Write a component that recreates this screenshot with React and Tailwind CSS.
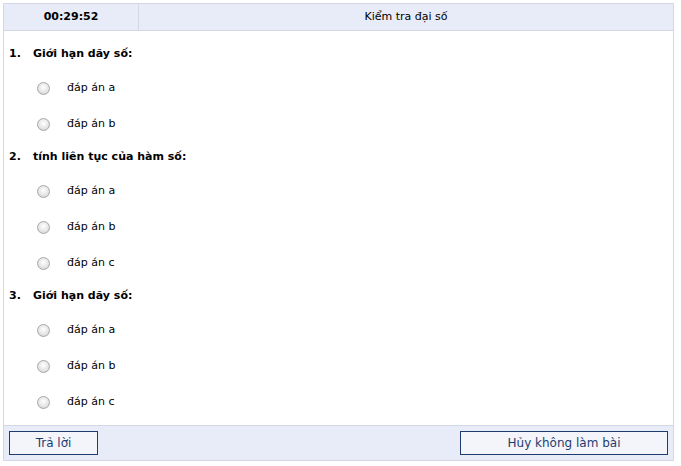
const questions = [
  { title: "Giới hạn dãy số:", options: ["đáp án a", "đáp án b"] },
  { title: "tính liên tục của hàm số:", options: ["đáp án a", "đáp án b", "đáp án c"] },
  { title: "Giới hạn dãy số:", options: ["đáp án a", "đáp án b", "đáp án c"] },
];

const Radio = () => (
  <span className="inline-block w-[13px] h-[13px] rounded-full border border-[#a8a8a8] bg-[radial-gradient(circle_at_50%_40%,#ffffff_0%,#e6e6e6_55%,#c8c8c8_100%)]" />
);

export default function App() {
  return (
    <div className="bg-white w-[681px] h-[466px] pt-[3px] pl-[3px]" style={{ fontFamily: "'DejaVu Sans', Verdana, sans-serif" }}>
      <div className="w-[671px] border border-[#d4d8e4] text-[11px] text-black">
        {/* header */}
        <div className="flex h-[27px] bg-[#e8ecf8] border-b border-[#d4d8e4]">
          <div className="w-[135px] border-r border-[#d4d8e4] flex items-center justify-center font-bold">00:29:52</div>
          <div className="flex-1 flex items-center justify-center">Kiểm tra đại số</div>
        </div>

        {/* questions */}
        <div className="h-[394px] overflow-hidden pt-[13px] pl-[5px]">
          {questions.map((q, i) => (
            <div key={i} className="mb-[5px]">
              <div className="flex items-center h-[20px] font-bold">
                <span className="w-[24px] shrink-0">{i + 1}.</span>
                <span>{q.title}</span>
              </div>
              <div className="pt-[6px]">
                {q.options.map((o) => (
                  <label key={o} className="flex items-center h-[36px] pl-[28px]">
                    <Radio />
                    <span className="ml-[17px]">{o}</span>
                  </label>
                ))}
              </div>
            </div>
          ))}
        </div>

        {/* footer */}
        <div className="flex justify-between items-center h-[35px] bg-[#e8ecf8] border-t border-[#d4d8e4] px-[5px]">
          <button className="w-[89px] h-[24px] border border-[#1f3c6e] bg-[#f3f5fb] text-[#1f3c6e] text-[12px]">Trả lời</button>
          <button className="w-[208px] h-[24px] border border-[#1f3c6e] bg-[#f3f5fb] text-[#1f3c6e] text-[12px]">Hủy không làm bài</button>
        </div>
      </div>
    </div>
  );
}
